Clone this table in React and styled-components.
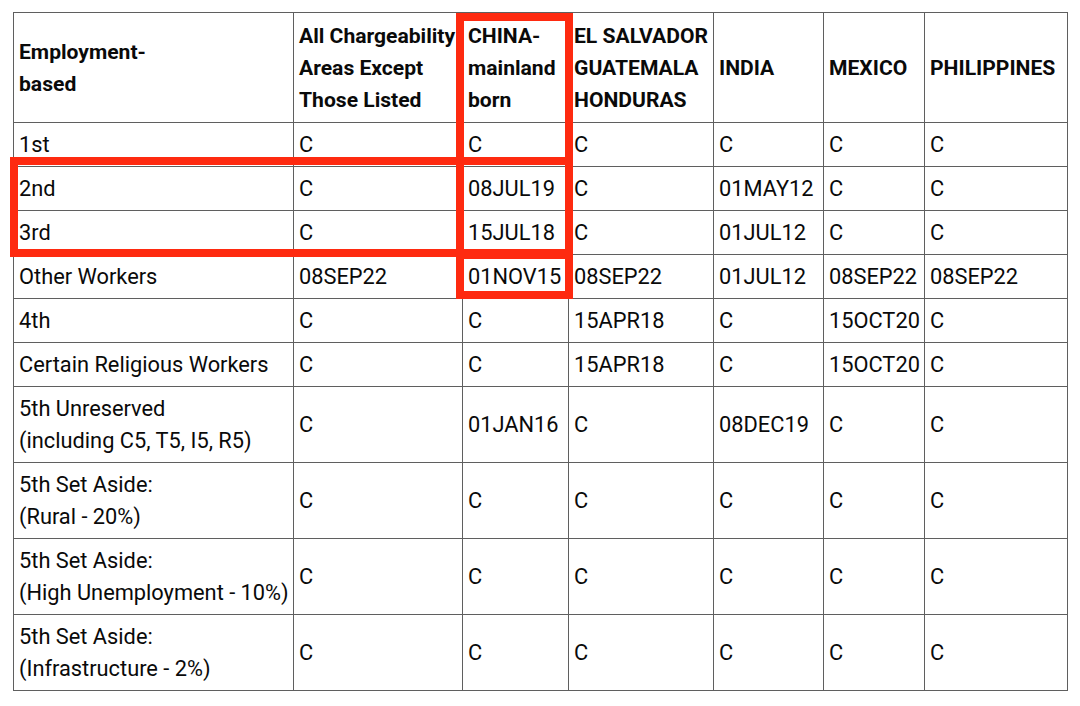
import React from 'react';
import styled, { createGlobalStyle } from 'styled-components';

const GlobalStyle = createGlobalStyle`
  html, body {
    margin: 0;
    padding: 0;
    background: #fff;
  }
  body {
    font-family: Roboto, "Liberation Sans", sans-serif;
    color: #0a0a0a;
  }
`;

const columns = [280, 169, 106, 145, 110, 101, 143];

const headers = [
  ['Employment-', 'based'],
  ['All Chargeability', 'Areas Except', 'Those Listed'],
  ['CHINA-', 'mainland', 'born'],
  ['EL SALVADOR', 'GUATEMALA', 'HONDURAS'],
  ['INDIA'],
  ['MEXICO'],
  ['PHILIPPINES'],
];

const rows = [
  { label: ['1st'], values: ['C', 'C', 'C', 'C', 'C', 'C'] },
  { label: ['2nd'], values: ['C', '08JUL19', 'C', '01MAY12', 'C', 'C'] },
  { label: ['3rd'], values: ['C', '15JUL18', 'C', '01JUL12', 'C', 'C'] },
  { label: ['Other Workers'], values: ['08SEP22', '01NOV15', '08SEP22', '01JUL12', '08SEP22', '08SEP22'] },
  { label: ['4th'], values: ['C', 'C', '15APR18', 'C', '15OCT20', 'C'] },
  { label: ['Certain Religious Workers'], values: ['C', 'C', '15APR18', 'C', '15OCT20', 'C'] },
  { label: ['5th Unreserved', '(including C5, T5, I5, R5)'], values: ['C', '01JAN16', 'C', '08DEC19', 'C', 'C'] },
  { label: ['5th Set Aside:', '(Rural - 20%)'], values: ['C', 'C', 'C', 'C', 'C', 'C'] },
  { label: ['5th Set Aside:', '(High Unemployment - 10%)'], values: ['C', 'C', 'C', 'C', 'C', 'C'] },
  { label: ['5th Set Aside:', '(Infrastructure - 2%)'], values: ['C', 'C', 'C', 'C', 'C', 'C'] },
];

// red marker boxes drawn over the table
const marks = [
  { left: 456, top: 13, width: 117, height: 244 },
  { left: 10, top: 157, width: 563, height: 100 },
  { left: 456, top: 251, width: 117, height: 48 },
];

export default function App() {
  return (
    <>
      <GlobalStyle />
      <Page>
        <Table>
          <colgroup>
            {columns.map((w, i) => (
              <col key={i} style={{ width: w }} />
            ))}
          </colgroup>
          <thead>
            <tr>
              {headers.map((lines, i) => (
                <HeadCell key={i}>
                  {lines.map((l, j) => (
                    <Line key={j}>{l}</Line>
                  ))}
                </HeadCell>
              ))}
            </tr>
          </thead>
          <tbody>
            {rows.map(row => (
              <tr key={row.label.join(' ')}>
                <Cell>
                  {row.label.map((l, j) => (
                    <Line key={j}>{l}</Line>
                  ))}
                </Cell>
                {row.values.map((v, i) => (
                  <Cell key={i}>{v}</Cell>
                ))}
              </tr>
            ))}
          </tbody>
        </Table>
        {marks.map((m, i) => (
          <Mark key={i} $left={m.left} $top={m.top} $width={m.width} $height={m.height} />
        ))}
      </Page>
    </>
  );
}

const Page = styled.div`
  position: relative;
  width: 1080px;
  height: 706px;
  padding: 12px 0 0 13px;
  box-sizing: border-box;
`;

const Table = styled.table`
  width: 1054px;
  table-layout: fixed;
  border-collapse: collapse;
  line-height: 32px;
`;

const HeadCell = styled.th`
  border: 1px solid #5f5f5f;
  padding: 7px 4px 6px 5px;
  text-align: left;
  vertical-align: middle;
  font-size: 21.1px;
  font-weight: 700;
  white-space: nowrap;
  overflow: hidden;
`;

const Cell = styled.td`
  border: 1px solid #5f5f5f;
  padding: 6px 4px 5px 5px;
  text-align: left;
  vertical-align: middle;
  font-size: 21.8px;
  font-weight: 400;
  white-space: nowrap;
`;

const Line = styled.div`
  display: block;
`;

const Mark = styled.div`
  position: absolute;
  left: ${p => p.$left}px;
  top: ${p => p.$top}px;
  width: ${p => p.$width}px;
  height: ${p => p.$height}px;
  border: 8px solid #fe2a10;
  box-sizing: border-box;
  pointer-events: none;
`;
